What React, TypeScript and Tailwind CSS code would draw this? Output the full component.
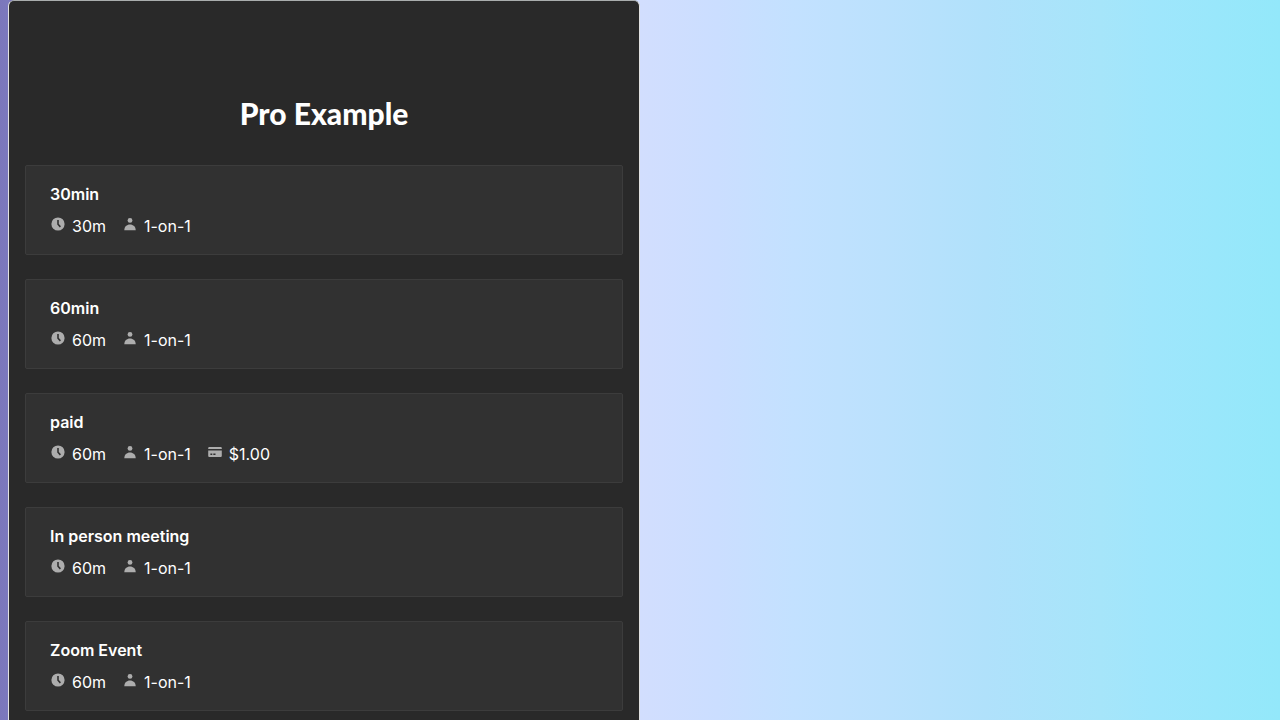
import React from "react";

type EventType = { title: string; duration: string; price?: string };

const events: EventType[] = [
  { title: "30min", duration: "30m" },
  { title: "60min", duration: "60m" },
  { title: "paid", duration: "60m", price: "$1.00" },
  { title: "In person meeting", duration: "60m" },
  { title: "Zoom Event", duration: "60m" },
];

function ClockIcon() {
  return (
    <svg className="size-4" viewBox="0 0 16 16" fill="none" aria-hidden="true">
      <circle cx="8" cy="8" r="6.6" fill="#adadad" />
      <path d="M8 4v4.2l2.4 2.7" stroke="#303030" strokeWidth="1.6" />
    </svg>
  );
}

function PersonIcon() {
  return (
    <svg className="size-4" viewBox="0 0 16 16" fill="#adadad" aria-hidden="true">
      <circle cx="8" cy="4.4" r="2.4" />
      <path d="M2.3 14.2C2.3 10.7 4.8 8.5 8 8.5s5.7 2.200 5.7 5.7z" />
    </svg>
  );
}

function CardIcon() {
  return (
    <svg className="size-4" viewBox="0 0 16 16" aria-hidden="true">
      <path d="M1.2 5V4.2C1.2 3.500 1.7 3 2.4 3h11.2c.7 0 1.2.5 1.2 1.2V5z" fill="#adadad" />
      <path d="M1.2 6.500h13.6v5.200c0 .8-.5 1.300-1.3 1.300h-11c-.8 0-1.3-.5-1.3-1.300z" fill="#adadad" />
      <path d="M3.4 10.2h1.9M6.3 10.2h2.2" stroke="#303030" strokeWidth="1.6" />
    </svg>
  );
}

function Detail({ icon, text }: { icon: React.ReactNode; text: string }) {
  return (
    <li className="flex items-center gap-1.5">
      <span className="pb-1">{icon}</span>
      <span>{text}</span>
    </li>
  );
}

export default function App() {
  return (
    <main className="min-h-screen bg-[linear-gradient(90deg,#7b77bb_0%,#7d7abf_1%,#d2defe_50%,#cbdeff_56%,#c3e1ff_62%,#bbe1fd_69%,#b0e1fb_77%,#a6e5fa_86%,#9fe6fc_90%,#93e8fa_100%)] pl-2 font-['Inter','Liberation_Sans',sans-serif] text-white">
      <section className="mr-[50vw] min-h-screen rounded-t-md border border-b-0 border-[#e1e1e1] border-t-[#a9adad] bg-[#292929] px-4 pt-23 pb-6">
        <h1 className="mb-8 text-center font-['Lato','Inter',sans-serif] text-3xl leading-10 font-black">Pro Example</h1>
        <div className="flex flex-col gap-6">
          {events.map((event) => (
            <a
              key={event.title}
              href={"#" + event.title}
              className="block rounded-xs border border-[#3c3c3c] bg-[#313131] px-6 py-4 text-base"
            >
              <h2 className="font-semibold">{event.title}</h2>
              <ul className="mt-2 flex gap-4">
                <Detail icon={<ClockIcon />} text={event.duration} />
                <Detail icon={<PersonIcon />} text="1-on-1" />
                {event.price && <Detail icon={<CardIcon />} text={event.price} />}
              </ul>
            </a>
          ))}
        </div>
      </section>
    </main>
  );
}
